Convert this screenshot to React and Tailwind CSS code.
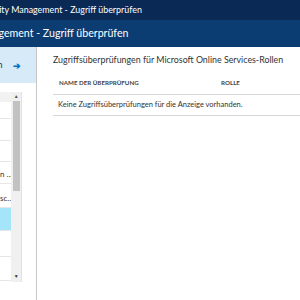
import React from 'react';

const rows = [
  { h: 'h-[17px]', text: '' },
  { h: 'h-[22px]', text: '' },
  { h: 'h-[21px]', text: '' },
  { h: 'h-[22px]', text: 'n ...' },
  { h: 'h-[24px]', text: 'sc...' },
  { h: 'h-[23px]', text: '', selected: true },
  { h: 'h-[26px]', text: '' },
  { h: 'h-[24px]', text: '' },
];

const App = () => {
  return (
    <div className="w-[300px] h-[300px] overflow-hidden bg-white font-['Lato','Open_Sans',sans-serif] text-[#333]">
      {/* Top bar */}
      <div className="h-[20px] bg-[#0a2a55] flex items-center overflow-hidden">
        <span className="ml-[-21px] whitespace-nowrap text-[8.9px] text-white">Identity Management - Zugriff überprüfen</span>
      </div>
      <div className="h-[27px] bg-[#0c3d72] flex items-center overflow-hidden">
        <span className="ml-[-66px] whitespace-nowrap text-[10.6px] text-white">Identity Management - Zugriff überprüfen</span>
      </div>

      <div className="flex h-[253px]">
        {/* Left blade */}
        <div className="w-[37px] shrink-0 border-r border-[#c6c6c6] flex flex-col">
          <div className="h-[36px] bg-[#d6eaf8] flex items-center overflow-hidden">
            <span className="ml-[-22px] whitespace-nowrap text-[9px]">Rollen</span>
            <span className="ml-[11px] text-[#0072c6] text-[9px] font-bold leading-none">➔</span>
          </div>
          <div className="mt-[9px] flex w-[22px] h-[190px] border-r border-[#e2e2e2]">
            <div className="w-[12px] overflow-hidden flex flex-col">
              <div className="h-[10px] bg-[#f2f2f2] shrink-0" />
              {rows.map((r, i) => (
                <div
                  key={i}
                  className={`${r.h} shrink-0 border-b border-[#e6e6e6] flex items-end pb-[3px] text-[8px] whitespace-nowrap ${r.selected ? 'bg-[#a4e5f9]' : ''}`}
                >
                  {r.text}
                </div>
              ))}
            </div>
            <div className="w-[10px] bg-[#f0f0f0] flex flex-col items-center">
              <div className="h-[9px] flex items-center text-[5px] text-[#555]">▲</div>
              <div className="w-[7px] h-[90px] bg-[#c2c2c2]" />
              <div className="flex-1" />
              <div className="h-[10px] flex items-center text-[5px] text-[#333]">▼</div>
            </div>
          </div>
        </div>

        {/* Right content */}
        <div className="flex-1 pl-[16px] pt-[6px]">
          <div className="text-[8.85px] whitespace-nowrap text-[#333] leading-[14px]">
            Zugriffsüberprüfungen für Microsoft Online Services-Rollen
          </div>
          <div className="mt-[8px] flex border-b border-[#d6d6d6] h-[20px] text-[6.2px] font-bold uppercase text-[#444] whitespace-nowrap">
            <div className="pl-[6px] w-[168px] pt-[3px]">Name der Überprüfung</div>
            <div className="pt-[3px]">Rolle</div>
          </div>
          <div className="h-[21px] flex items-center pl-[5px] border-b border-[#d6d6d6] text-[7.5px] whitespace-nowrap text-[#333]">
            Keine Zugriffsüberprüfungen für die Anzeige vorhanden.
          </div>
        </div>
      </div>
    </div>
  );
};

export default App;
